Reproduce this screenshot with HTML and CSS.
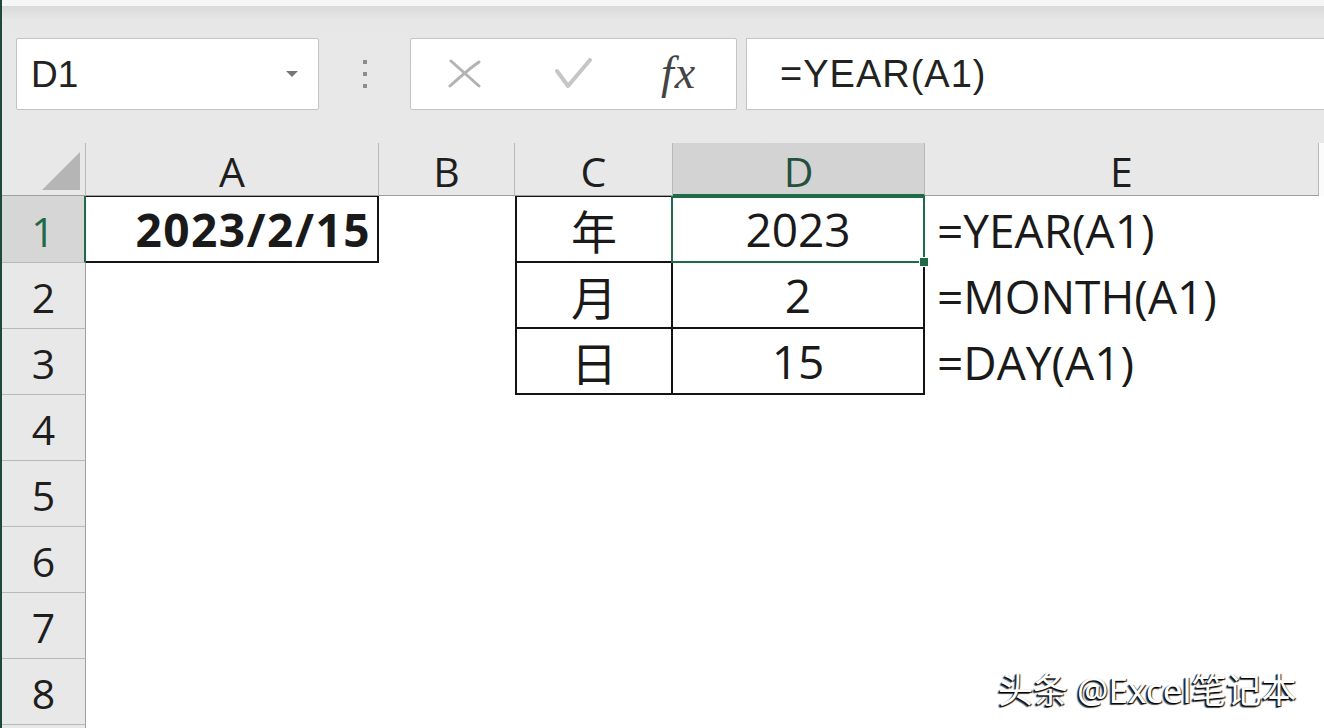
FILE: index.html
```html
<!DOCTYPE html>
<html lang="zh-CN">
<head>
    <meta charset="UTF-8">
    <meta name="viewport" content="width=device-width, initial-scale=1.0">
    <title>YEAR MONTH DAY</title>
    <link rel="stylesheet" href="styles.css">
</head>
<body>
    <div class="app">
        <div class="top-strip"></div>
        <div class="formula-bar">
            <div class="name-box">
                <span class="name-text">D1</span>
                <span class="name-arrow"></span>
            </div>
            <div class="grip">
                <span></span><span></span><span></span>
            </div>
            <div class="fx-buttons">
                <svg class="btn-x" width="34" height="30" viewBox="0 0 34 30">
                    <path d="M3 2 L31 27" />
                    <path d="M31 3 C22 9 12 18 2 27" />
                </svg>
                <svg class="btn-ok" width="38" height="32" viewBox="0 0 38 32">
                    <path d="M2 13 L13 28 L35 2" />
                </svg>
                <span class="btn-fx">fx</span>
            </div>
            <div class="formula-input">=YEAR(A1)</div>
        </div>

        <div class="sheet">
            <div class="corner"><span class="corner-tri"></span></div>
            <div class="col-head">A</div>
            <div class="col-head">B</div>
            <div class="col-head">C</div>
            <div class="col-head active">D</div>
            <div class="col-head">E</div>
            <div class="col-rest"></div>

            <div class="row-head active">1</div>
            <div class="cell bold right bx bt">2023/2/15</div>
            <div class="cell"></div>
            <div class="cell center bx bl bt">年</div>
            <div class="cell center bx bt sel">2023</div>
            <div class="cell formula">=YEAR(A1)</div>
            <div class="cell"></div>

            <div class="row-head">2</div>
            <div class="cell"></div>
            <div class="cell"></div>
            <div class="cell center bx bl">月</div>
            <div class="cell center bx">2</div>
            <div class="cell formula">=MONTH(A1)</div>
            <div class="cell"></div>

            <div class="row-head">3</div>
            <div class="cell"></div>
            <div class="cell"></div>
            <div class="cell center bx bl">日</div>
            <div class="cell center bx">15</div>
            <div class="cell formula">=DAY(A1)</div>
            <div class="cell"></div>

            <div class="row-head">4</div>
            <div class="cell wide"></div>
            <div class="row-head">5</div>
            <div class="cell wide"></div>
            <div class="row-head">6</div>
            <div class="cell wide"></div>
            <div class="row-head">7</div>
            <div class="cell wide"></div>
            <div class="row-head">8</div>
            <div class="cell wide"></div>
            <div class="row-head last"></div>
            <div class="cell wide"></div>
        </div>

        <div class="watermark">头条 @Excel笔记本</div>
    </div>
</body>
</html>
```

FILE: styles.css
```css
body {
    margin: 0;
    background-color: #fff;
    font-family: "Open Sans", "Noto Sans CJK SC", sans-serif;
    color: #1a1a1a;
    overflow: hidden;
}

.app {
    position: relative;
    height: 728px;
    border-left: 2px solid #1c4a37;
    overflow: hidden;
}

.top-strip {
    height: 6px;
    background-color: #f6f6f6;
}

/* formula bar */

.formula-bar {
    height: 137px;
    box-sizing: border-box;
    padding-top: 32px;
    display: flex;
    align-items: flex-start;
    background: linear-gradient(#d9d9d9, #e7e7e7 14px, #e8e8e8);
}

.name-box {
    margin-left: 14px;
    width: 303px;
    height: 72px;
    box-sizing: border-box;
    background-color: #fff;
    border: 1px solid #c4c4c4;
    border-radius: 2px;
    display: flex;
    align-items: center;
    justify-content: space-between;
    padding: 0 20px 0 14px;
}

.name-text {
    font-family: "Liberation Sans", Arial, sans-serif;
    font-size: 37px;
    color: #222;
    padding-top: 2px;
}

.name-arrow {
    width: 0;
    height: 0;
    border-left: 6px solid transparent;
    border-right: 6px solid transparent;
    border-top: 6px solid #777;
}

.grip {
    width: 91px;
    height: 72px;
    display: flex;
    flex-direction: column;
    align-items: center;
    justify-content: center;
    gap: 8px;
}

.grip span {
    width: 4px;
    height: 4px;
    background-color: #8c8c8c;
}

.fx-buttons {
    width: 327px;
    height: 72px;
    box-sizing: border-box;
    background-color: #fff;
    border: 1px solid #c4c4c4;
    border-radius: 2px;
    display: flex;
    align-items: center;
    padding-left: 37px;
}

.fx-buttons svg {
    fill: none;
    stroke-linecap: round;
    stroke-linejoin: round;
}

.btn-x {
    stroke: #b3b3b3;
    stroke-width: 3;
}

.btn-ok {
    margin-left: 73px;
    stroke: #c6c6c6;
    stroke-width: 4;
}

.btn-fx {
    margin-left: 68px;
    font-family: "Liberation Serif", serif;
    font-style: italic;
    font-size: 46px;
    color: #444;
    letter-spacing: 1px;
    padding-bottom: 4px;
}

.formula-input {
    flex: 1;
    margin-left: 9px;
    height: 72px;
    box-sizing: border-box;
    background-color: #fff;
    border: 1px solid #c4c4c4;
    border-right: none;
    padding-left: 33px;
    display: flex;
    align-items: center;
    font-family: "Liberation Sans", Arial, sans-serif;
    font-size: 38px;
    letter-spacing: 1px;
    color: #222;
}

/* sheet grid */

.sheet {
    display: grid;
    grid-template-columns: 84px 293px 136px 158px 252px 394px 1fr;
    grid-template-rows: 53px 67px repeat(7, 66px) 1fr;
}

.corner {
    background-color: #e8e8e8;
    border-right: 1px solid #b8b8b8;
    border-bottom: 1px solid #9f9f9f;
    position: relative;
}

.corner-tri {
    position: absolute;
    right: 5px;
    bottom: 5px;
    width: 0;
    height: 0;
    border-left: 38px solid transparent;
    border-bottom: 38px solid #b5b5b5;
}

.col-head {
    background-color: #e8e8e8;
    border-right: 1px solid #b8b8b8;
    border-bottom: 1px solid #9f9f9f;
    display: flex;
    align-items: center;
    justify-content: center;
    font-size: 41px;
    padding-top: 4px;
    color: #1e1e1e;
}

.col-head.active {
    background-color: #d3d3d3;
    color: #24503f;
    border-bottom: 2px solid #1e6b46;
}

.col-rest {
    background-color: #fbfbfb;
}

.row-head {
    background-color: #e8e8e8;
    border-bottom: 1px solid #b8b8b8;
    border-right: 1px solid #9f9f9f;
    display: flex;
    align-items: center;
    justify-content: center;
    font-size: 41px;
    padding-top: 3px;
    color: #1e1e1e;
}

.row-head.active {
    background-color: #d6d6d6;
    color: #1f6a4a;
    border-right: 2px solid #1e6b46;
}

.row-head.last {
    border-bottom: none;
}

.cell {
    background-color: #fff;
    box-sizing: border-box;
    display: flex;
    align-items: center;
    font-size: 46px;
}

.cell.wide {
    grid-column: 2 / 8;
}

.cell.center {
    justify-content: center;
}

.cell.right {
    justify-content: flex-end;
    padding-right: 6px;
}

.cell.bold {
    font-weight: 700;
    font-size: 46px;
    letter-spacing: 1.5px;
}

.cell.formula {
    padding-left: 12px;
}

.bx {
    border-right: 2px solid #141414;
    border-bottom: 2px solid #141414;
}

.bl {
    border-left: 2px solid #141414;
}

.bt {
    border-top: 1px solid #141414;
}

.sel {
    position: relative;
}

.sel::before {
    content: "";
    position: absolute;
    top: -1px;
    left: -2px;
    right: -2px;
    bottom: -2px;
    border: 2px solid #1e6b46;
}

.sel::after {
    content: "";
    position: absolute;
    right: -6px;
    bottom: -6px;
    width: 8px;
    height: 8px;
    background-color: #1e6b46;
    border: 1px solid #fff;
}

.watermark {
    position: absolute;
    left: 996px;
    top: 662px;
    font-family: "Noto Sans", "Noto Sans CJK SC", sans-serif;
    font-size: 35px;
    color: #fff;
    text-shadow: -1px 1px 1px #000, 1px 1px 1px #222, -2px 2px 1px #555;
}
```
